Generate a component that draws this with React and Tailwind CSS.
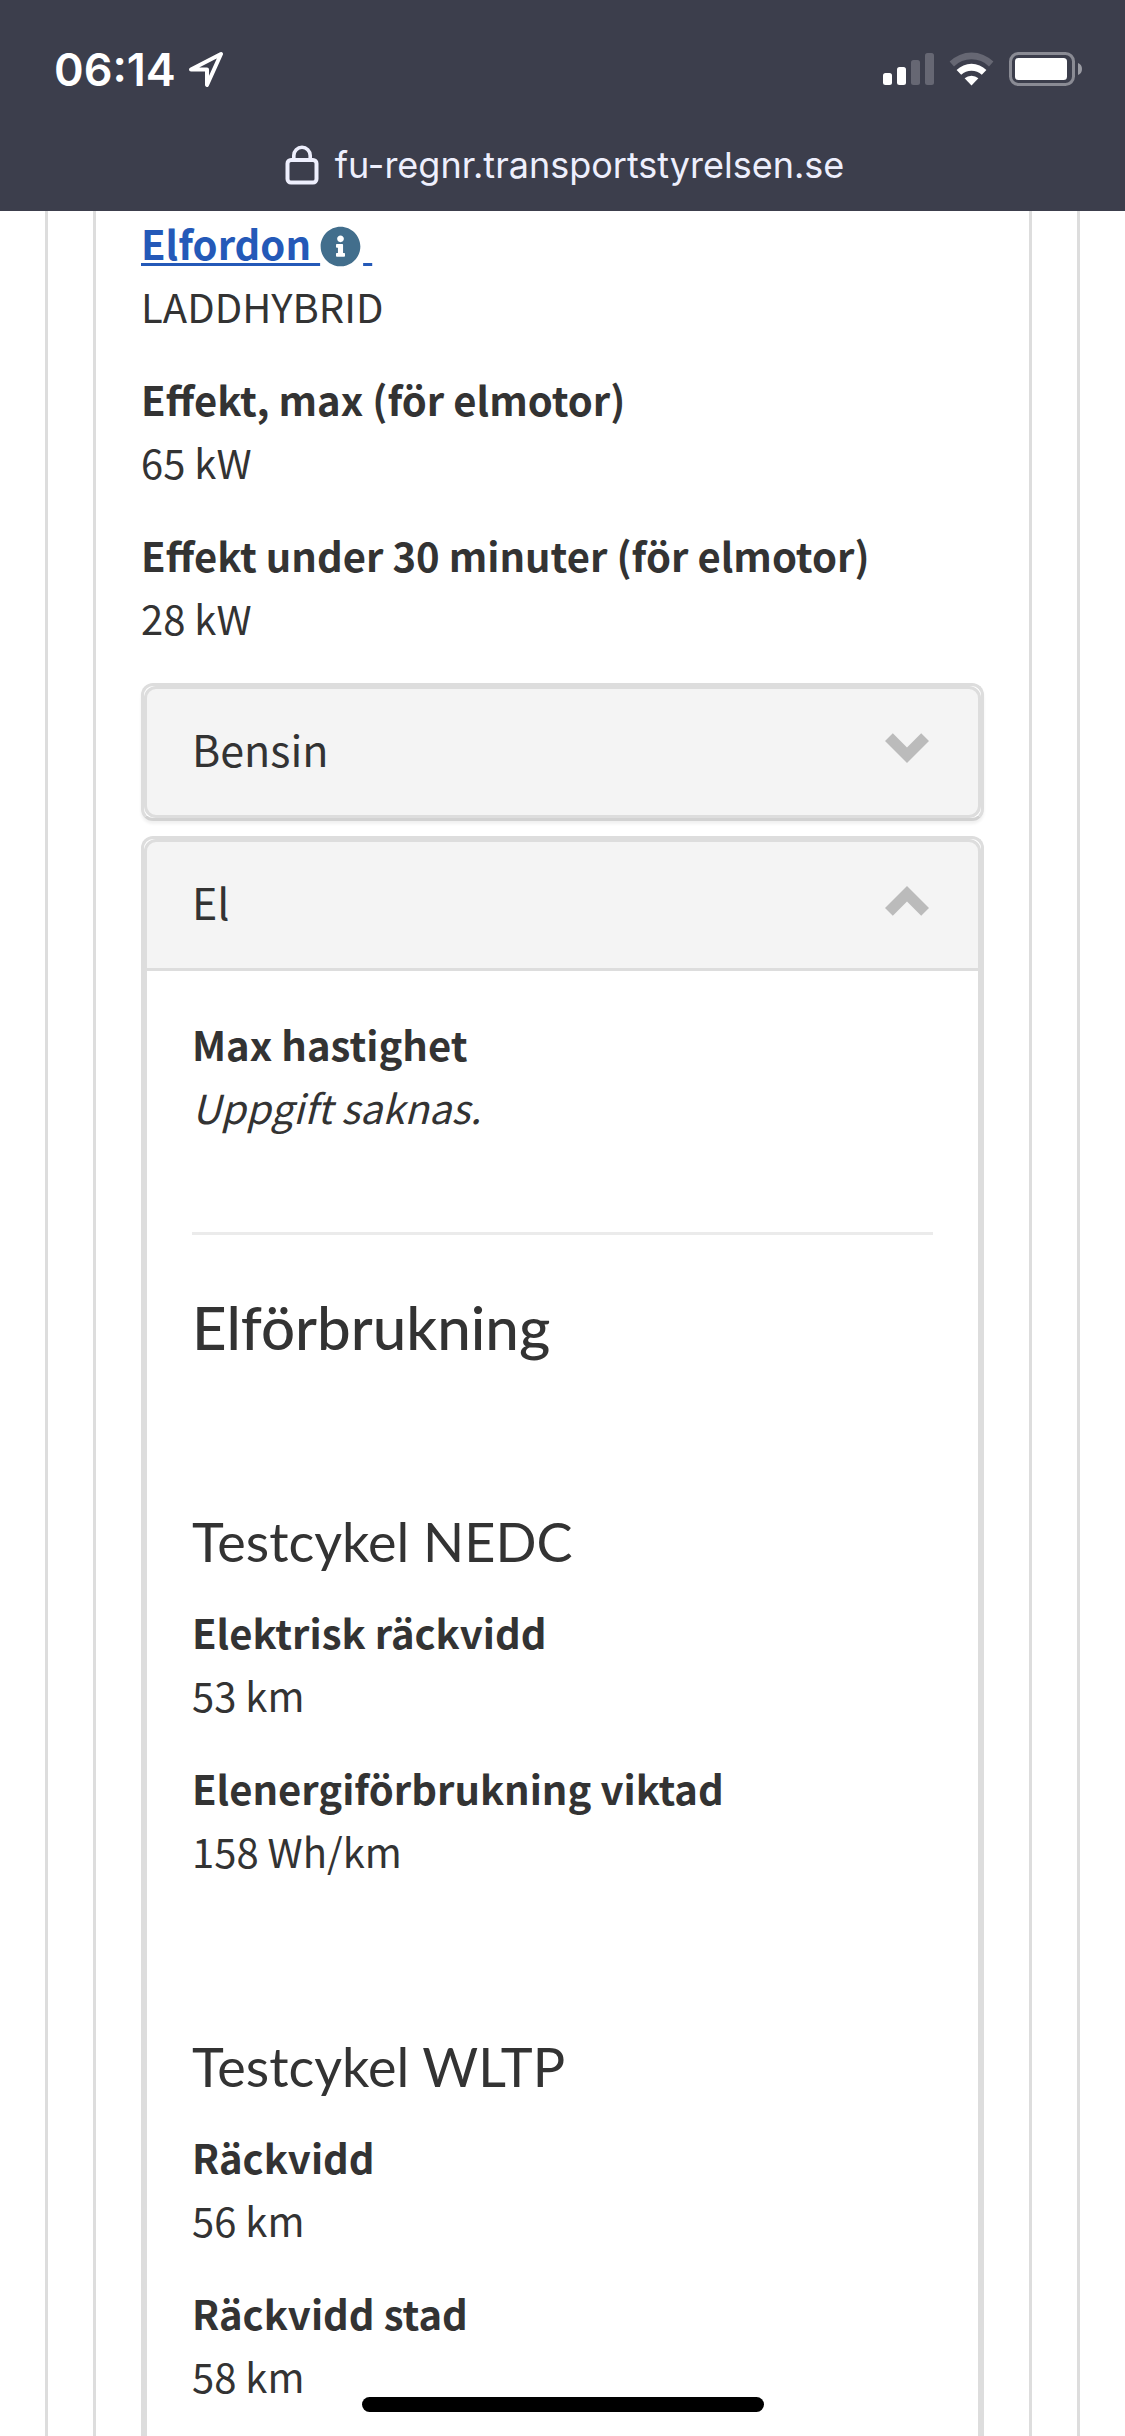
import React, { useState } from "react";
import { FaInfoCircle } from "react-icons/fa";

const general = [
  { label: "Effekt, max (för elmotor)", value: "65 kW" },
  { label: "Effekt under 30 minuter (för elmotor)", value: "28 kW" },
];

const cycles = [
  {
    title: "Testcykel NEDC",
    rows: [
      { label: "Elektrisk räckvidd", value: "53 km" },
      { label: "Elenergiförbrukning viktad", value: "158 Wh/km" },
    ],
  },
  {
    title: "Testcykel WLTP",
    rows: [
      { label: "Räckvidd", value: "56 km" },
      { label: "Räckvidd stad", value: "58 km" },
    ],
  },
];

const StatusBar = () => (
  <header className="bg-[#3c3e4c] text-white font-['Inter',sans-serif]">
    <div className="flex items-center justify-between h-[138px] pl-[54px] pr-[43px]">
      <div className="flex items-center gap-3">
        <span className="text-[45px] leading-none font-semibold">06:14</span>
        <svg width="36" height="36" viewBox="0 0 36 36" fill="none" stroke="white" strokeWidth="4" strokeLinejoin="round" aria-hidden="true">
          <path d="M33 3 19 34V18.5H3Z" />
        </svg>
      </div>
      <div className="flex items-center gap-[15px]">
        {/* Signal */}
        <svg width="51" height="34" viewBox="0 0 51 34" aria-hidden="true">
          <rect x="0" y="21" width="9" height="12" rx="2.5" fill="white" />
          <rect x="14" y="15" width="9" height="18" rx="2.5" fill="white" />
          <rect x="28" y="8" width="9" height="25" rx="2.5" fill="#666773" />
          <rect x="42" y="1" width="9" height="32" rx="2.5" fill="#666773" />
        </svg>
        {/* Wifi */}
        <svg width="45" height="34" viewBox="0 0 45 34" aria-hidden="true">
          <path d="M0.6 9.6A31 31 0 0 1 44.4 9.6L40 14.4A25 25 0 0 0 5 14.4Z" fill="#666773" />
          <path d="M7.6 18A21 21 0 0 1 37.4 18L32.8 22.8A15 15 0 0 0 12.2 22.8Z" fill="white" />
          <path d="M15.6 26.3A10.5 10.5 0 0 1 29.4 26.3L22.5 33.5Z" fill="white" />
        </svg>
        {/* Battery */}
        <svg width="73" height="34" viewBox="0 0 73 34" aria-hidden="true">
          <rect x="1.5" y="1.5" width="63" height="31" rx="8" fill="none" stroke="#8a8b94" strokeWidth="3" />
          <rect x="6" y="6" width="52" height="22" rx="3.5" fill="white" />
          <path d="M69 11Q73 12.5 73 17T69 23Z" fill="#9a9ba3" />
        </svg>
      </div>
    </div>
    <div className="flex items-center justify-center gap-4 h-[73px] pl-1 pb-5 text-[#eeeffd]">
      <svg width="34" height="40" viewBox="0 0 34 40" fill="none" stroke="currentColor" strokeWidth="4" aria-hidden="true">
        <rect x="2.5" y="15" width="29" height="22.5" rx="3.5" />
        <path d="M8.8 15V10.5A8.2 8.2 0 0 1 25.2 10.5V15" strokeWidth="3.6" />
      </svg>
      <span className="text-[36px] leading-[56px]">fu-regnr.transportstyrelsen.se</span>
    </div>
  </header>
);

const Chevron = ({ open }) => (
  <svg width="44" height="30" viewBox="0 0 44 30" fill="#bbbbbb" aria-hidden="true">
    {open ? (
      <path d="M22 0 44 22 36.2 29.8 22 15.6 7.8 29.8 0 22Z" />
    ) : (
      <path d="M22 30 44 8 36.2 0.2 22 14.4 7.8 0.2 0 8Z" />
    )}
  </svg>
);

const Field = ({ label, value, missing }) => (
  <div className="text-[40px] leading-[63px]">
    <dt className="font-bold">{label}</dt>
    <dd className={missing ? "italic" : ""}>{value}</dd>
  </div>
);

const Accordion = ({ title, defaultOpen = false, children }) => {
  const [open, setOpen] = useState(defaultOpen);

  return (
    <section
      className={`flex flex-col border-[3px] border-[#dddddd] bg-white ${
        open ? "flex-1 rounded-t-xl border-b-0" : "rounded-xl border-b-[#d2d2d2] shadow-[0_3px_3px_rgba(0,0,0,0.06)]"
      }`}
    >
      <h2>
        <button
          type="button"
          aria-expanded={open}
          onClick={() => setOpen(!open)}
          className={`flex w-full items-center justify-between h-[132px] pl-[45px] pr-[49px] pb-2 border-[3px] border-[#dddddd] bg-[#f4f4f4] text-[43px] text-left ${
            open ? "rounded-t-xl" : "rounded-xl"
          }`}
        >
          <span>{title}</span>
          <Chevron open={open} />
        </button>
      </h2>
      {open && <div className="flex-1 border-x-[3px] border-[#dddddd] px-[45px] pt-[42px]">{children}</div>}
    </section>
  );
};

const App = () => {
  return (
    <div className="flex flex-col min-h-screen bg-white text-[#333333] font-['Noto_Sans_CJK_JP',sans-serif]">
      <StatusBar />

      <main className="flex flex-1 flex-col mx-[45px] px-[45px] border-x-[3px] border-[#dddddd]">
        <div className="flex flex-1 flex-col px-[45px] border-x-[3px] border-[#dddddd]">
          <dl className="flex flex-col gap-[30px] pt-px mb-[33px]">
            <Field
              label={
                <a href="#elfordon" className="text-[#2459b8] underline decoration-[3px] underline-offset-[3px]">
                  Elfordon <FaInfoCircle className="inline-block size-[41px] mr-[2px] mb-[6px] text-[#426e8c]" />
                  &nbsp;
                </a>
              }
              value="LADDHYBRID"
            />
            {general.map((row) => (
              <Field key={row.label} {...row} />
            ))}
          </dl>

          <div className="flex flex-1 flex-col gap-[15px]">
            <Accordion title="Bensin" />
            <Accordion title="El" defaultOpen>
              <dl>
                <Field label="Max hastighet" value="Uppgift saknas." missing />
              </dl>
              <hr className="mt-[93px] mb-14 border-t-[3px] border-[#ebebeb]" />
              <h3 className="font-['Lato',sans-serif] font-medium text-[60px] leading-[72px] mb-[143px]">Elförbrukning</h3>
              <div className="flex flex-col gap-[148px]">
                {cycles.map((cycle) => (
                  <section key={cycle.title}>
                    <h4 className="font-['Lato',sans-serif] text-[54px] leading-[72px] mb-[23px]">{cycle.title}</h4>
                    <dl className="flex flex-col gap-[30px]">
                      {cycle.rows.map((row) => (
                        <Field key={row.label} {...row} />
                      ))}
                    </dl>
                  </section>
                ))}
              </div>
            </Accordion>
          </div>
        </div>
      </main>

      {/* Home indicator */}
      <div className="fixed bottom-6 left-1/2 -translate-x-1/2 w-[402px] h-[15px] rounded-full bg-black" />
    </div>
  );
};

export default App;
